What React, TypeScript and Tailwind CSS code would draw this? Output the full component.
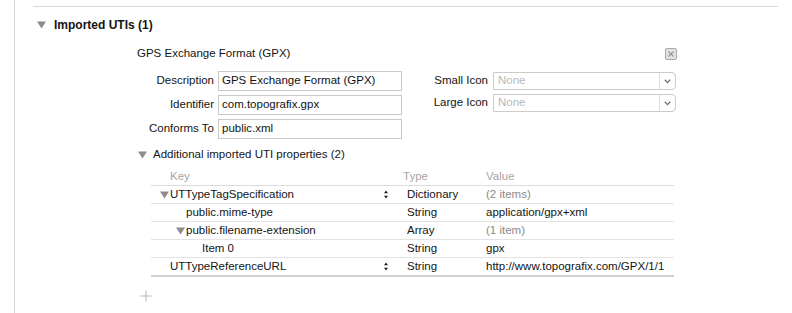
import React from 'react';

type Row = {
  key: string;
  level: 0 | 1 | 2;
  open?: boolean;
  stepper?: boolean;
  type: string;
  value: string;
  dim?: boolean;
};

const ROWS: Row[] = [
  { key: 'UTTypeTagSpecification', level: 0, open: true, stepper: true, type: 'Dictionary', value: '(2 items)', dim: true },
  { key: 'public.mime-type', level: 1, type: 'String', value: 'application/gpx+xml' },
  { key: 'public.filename-extension', level: 1, open: true, type: 'Array', value: '(1 item)', dim: true },
  { key: 'Item 0', level: 2, type: 'String', value: 'gpx' },
  { key: 'UTTypeReferenceURL', level: 0, stepper: true, type: 'String', value: 'http://www.topografix.com/GPX/1/1' },
];

const INDENT: Record<number, string> = {
  0: 'pl-[9px]',
  1: 'pl-[25px]',
  2: 'pl-[41px]',
};

const Disclosure = () => (
  <svg width="9" height="8" viewBox="0 0 9 8" className="shrink-0">
    <path d="M0 0.5 H9 L4.5 7.5 Z" fill="#8c8c8c" />
  </svg>
);

const Stepper = () => (
  <svg width="6" height="11" viewBox="0 0 6 11" className="ml-auto mr-[14px] shrink-0">
    <path d="M3 1.5 L5 4.3 H1 Z" fill="#1a1a1a" />
    <path d="M3 9.5 L5 6.7 H1 Z" fill="#1a1a1a" />
  </svg>
);

const TextField = ({ value }: { value: string }) => (
  <div className="h-[20px] w-[184px] border border-[#c9c9c9] bg-white pl-[3px] flex items-center text-[#111] whitespace-nowrap overflow-hidden">
    {value}
  </div>
);

const Popup = () => (
  <div className="h-[18px] w-[183px] border border-[#cbcbcb] rounded-r-[4px] bg-white flex items-center">
    <span className="pl-[4px] flex-1 text-[#b8b8b8]">None</span>
    <div className="h-full w-[16px] border-l border-[#dedede] flex items-center justify-center">
      <svg width="7" height="5" viewBox="0 0 7 5">
        <path d="M0.8 0.8 L3.5 3.6 L6.2 0.8" fill="none" stroke="#6e6e6e" strokeWidth="1.3" />
      </svg>
    </div>
  </div>
);

const CloseBox = () => (
  <div className="w-[12px] h-[12px] rounded-[2px] border border-[#a9a9a9] bg-[#e2e2e2] flex items-center justify-center">
    <svg width="6" height="6" viewBox="0 0 6 6">
      <path d="M0.5 0.5 L5.5 5.5 M5.5 0.5 L0.5 5.5" stroke="#9a9a9a" strokeWidth="1.2" />
    </svg>
  </div>
);

export default function App() {
  return (
    <div className="w-[792px] h-[313px] bg-white flex overflow-hidden font-['Liberation_Sans',Arial,sans-serif] text-[11.5px] leading-none text-[#141414]">
      <div className="w-[14px] shrink-0" />
      <div className="flex-1 border-l border-[#d6d6d6] pl-[18px] pr-[14px] flex flex-col">
        <div className="mt-[6px] h-px bg-[#d9d9d9]" />

        <div className="mt-[10px] h-[16px] flex items-center pl-[4px] gap-[8px]">
          <Disclosure />
          <span className="font-bold text-[12px]">Imported UTIs (1)</span>
        </div>

        <div className="pl-[104px] w-[644px] flex flex-col">
          <div className="mt-[13px] h-[16px] flex items-center justify-between">
            <span>GPS Exchange Format (GPX)</span>
            <CloseBox />
          </div>

          <div className="mt-[9px] flex">
            <div className="flex flex-col gap-[4px]">
              {[
                ['Description', 'GPS Exchange Format (GPX)'],
                ['Identifier', 'com.topografix.gpx'],
                ['Conforms To', 'public.xml'],
              ].map(([label, value]) => (
                <div key={label} className="flex items-center gap-[4px]">
                  <span className="w-[77px] text-right">{label}</span>
                  <TextField value={value} />
                </div>
              ))}
            </div>
            <div className="flex flex-col gap-[4px] pt-[1px]">
              {['Small Icon', 'Large Icon'].map((label) => (
                <div key={label} className="flex items-center gap-[5px]">
                  <span className="w-[86px] text-right">{label}</span>
                  <Popup />
                </div>
              ))}
            </div>
          </div>

          <div className="mt-[8px] h-[16px] flex items-center gap-[6px] pl-[1px]">
            <Disclosure />
            <span>Additional imported UTI properties (2)</span>
          </div>

          <div className="mt-[5px] ml-[14px] w-[523px] flex flex-col">
            <div className="h-[18px] flex items-center border-b border-[#dcdcdc] text-[#a6a6a6]">
              <span className="w-[252px] pl-[19px]">Key</span>
              <span className="w-[83px]">Type</span>
              <span>Value</span>
            </div>
            {ROWS.map((row, i) => {
              const last = i === ROWS.length - 1;
              return (
                <div
                  key={row.key}
                  className={
                    last
                      ? 'h-[19px] flex items-center border-b-2 border-[#d0d0d0]'
                      : 'h-[18px] flex items-center border-b border-[#e3e3e3]'
                  }
                >
                  <div className={`w-[252px] flex items-center ${INDENT[row.level]}`}>
                    <span className="w-[10px] flex items-center">{row.open ? <Disclosure /> : null}</span>
                    <span className="whitespace-nowrap">{row.key}</span>
                    {row.stepper ? <Stepper /> : null}
                  </div>
                  <span className="w-[83px] pl-[4px]">{row.type}</span>
                  <span className={`flex-1 whitespace-nowrap overflow-hidden ${row.dim ? 'text-[#8a8a8a]' : ''}`}>
                    {row.value}
                  </span>
                </div>
              );
            })}
          </div>

          <div className="mt-[13px] ml-[3px] w-[12px] h-[12px]">
            <svg width="12" height="12" viewBox="0 0 12 12">
              <path d="M6 0.5 V11.5 M0.5 6 H11.5" stroke="#b5b5b5" strokeWidth="1" />
            </svg>
          </div>
        </div>
      </div>
    </div>
  );
}
